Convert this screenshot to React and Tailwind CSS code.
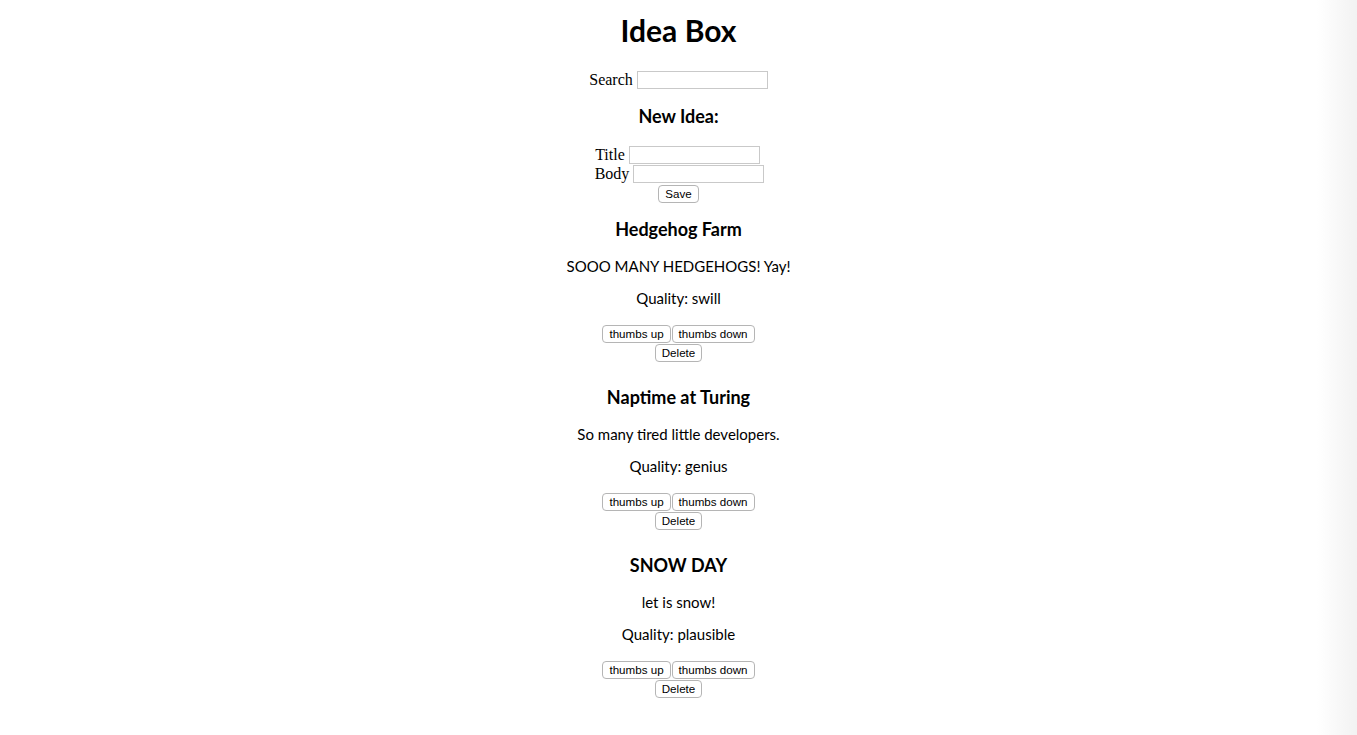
const IDEAS = [
  { title: 'Hedgehog Farm', body: 'SOOO MANY HEDGEHOGS! Yay!', quality: 'swill' },
  { title: 'Naptime at Turing', body: 'So many tired little developers.', quality: 'genius' },
  { title: 'SNOW DAY', body: 'let is snow!', quality: 'plausible' },
]

const btn =
  'h-[18px] rounded-[4px] border border-[#b5b5b5] bg-white px-[6px] text-[11.6px] leading-none text-black font-["Liberation_Sans",Arial,sans-serif]'

const input = 'h-[18px] w-[131px] border border-[#c9c9c9] bg-white'

function Idea({ idea }) {
  return (
    <div className="flex flex-col items-center">
      <h3 className="h-[22px] text-[18px] font-bold leading-[22px]">{idea.title}</h3>
      <p className="mt-[16px] h-[20px] text-[15px] leading-[20px]">{idea.body}</p>
      <p className="mt-[12px] h-[20px] text-[15px] leading-[20px]">Quality: {idea.quality}</p>
      <div className="mt-[17px] flex gap-[1px]">
        <button className={btn}>thumbs up</button>
        <button className={btn}>thumbs down</button>
      </div>
      <button className={`${btn} mt-[1px]`}>Delete</button>
    </div>
  )
}

export default function App() {
  return (
    <div className="relative min-h-[735px] bg-white text-black font-['Lato',sans-serif]">
      <div className="flex flex-col items-center pt-[10px]">
        <h1 className="h-[40px] text-[30px] font-bold leading-[40px]">Idea Box</h1>

        <div className="mt-[20px] flex h-[20px] items-center gap-[4px] font-['Liberation_Serif',serif] text-[16px]">
          <span>Search</span>
          <input className={input} />
        </div>

        <h2 className="mt-[15px] h-[22px] text-[18px] font-bold leading-[22px]">New Idea:</h2>

        <div className="mt-[18px] flex flex-col items-center font-['Liberation_Serif',serif] text-[16px]">
          <div className="flex h-[19px] items-center gap-[4px] pr-[2px]">
            <span>Title</span>
            <input className={input} />
          </div>
          <div className="flex h-[19px] items-center gap-[4px] pl-[2px]">
            <span>Body</span>
            <input className={input} />
          </div>
          <button className={`${btn} mt-[2px]`}>Save</button>
        </div>

        <div className="mt-[15px] flex flex-col items-center gap-[24px]">
          {IDEAS.map((idea) => (
            <Idea key={idea.title} idea={idea} />
          ))}
        </div>
      </div>

      {/* window edge shade */}
      <div className="pointer-events-none fixed right-0 top-0 h-full w-[40px] bg-gradient-to-r from-white to-[#f2f2f2]" />
    </div>
  )
}
